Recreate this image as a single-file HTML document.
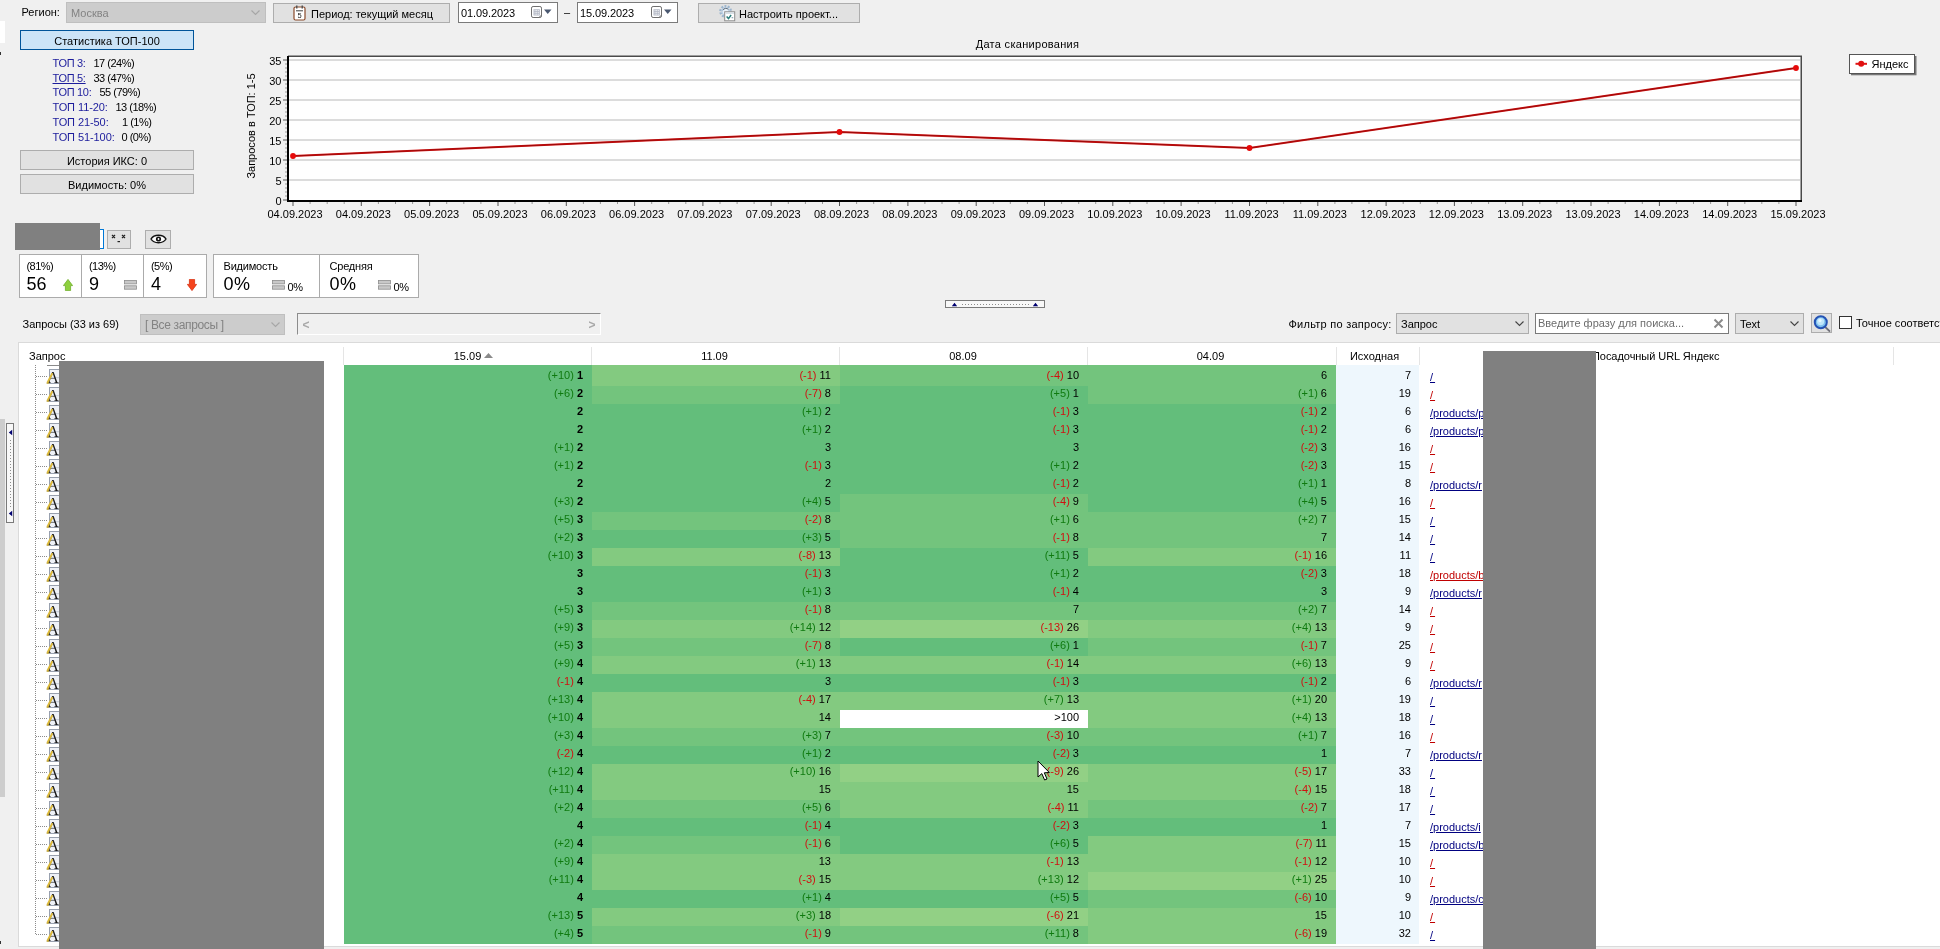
<!DOCTYPE html>
<html lang="ru"><head><meta charset="utf-8"><title>ТОП-100</title>
<style>
html,body{margin:0;padding:0}
body{width:1940px;height:949px;overflow:hidden;background:#f0f0f0;position:relative;
 font-family:"Liberation Sans",sans-serif;font-size:11px;color:#000;line-height:14px}
.a{position:absolute;white-space:nowrap}
.btn{position:absolute;box-sizing:border-box;background:#e1e1e1;border:1px solid #adadad;text-align:center;white-space:nowrap}
.cmbd{position:absolute;box-sizing:border-box;background:#cccccc;border:1px solid #bfbfbf;color:#838383;white-space:nowrap}
.inp{position:absolute;box-sizing:border-box;background:#fff;border:1px solid #7a7a7a;white-space:nowrap}
.gray{position:absolute;background:#808080}
.c{position:absolute;height:18px;box-sizing:border-box;text-align:right;white-space:nowrap;line-height:14px;padding-top:3px}
.g{color:#0f7a0f}.r{color:#d01010}
.c b{font-weight:bold}
.lb{color:#1c1c9c}
.u{text-decoration:underline}
.lnk{position:absolute;white-space:nowrap;text-decoration:underline;overflow:hidden;width:53px;height:14px}
.hd{position:absolute;top:348.5px;height:14px;white-space:nowrap}
</style></head><body>
<div id="app" style="position:absolute;left:0;top:0;width:1940px;height:949px;overflow:hidden;will-change:transform">

<div class="a" style="left:0;top:21px;width:5px;height:22px;background:#fff"></div>
<div class="a" style="left:0;top:52px;width:1px;height:3px;background:#333"></div>
<div class="a" style="left:0;top:419px;width:5px;height:378px;background:#cdcdcd"></div>
<div class="a" style="left:0;top:941px;width:1px;height:3px;background:#333"></div>
<div class="a" style="left:21.5px;top:5px">Регион:</div>
<div class="cmbd" style="left:66px;top:2px;width:200px;height:21px;padding:3px 0 0 4px">Москва<svg style="position:absolute;right:5px;top:7px" width="9" height="6" viewBox="0 0 9 6"><path d="M0.5 0.5 L4.5 4.5 L8.5 0.5" fill="none" stroke="#a6a6a6" stroke-width="1.1"/></svg></div>
<div class="btn" style="left:273px;top:3px;width:177px;height:20px"></div>
<svg class="a" style="left:293px;top:5px" width="13" height="16" viewBox="0 0 13 16">
<rect x="1" y="2" width="11" height="13" rx="1.5" fill="#fff" stroke="#8a4a2a" stroke-width="1.2"/>
<rect x="3" y="0.5" width="1.5" height="3" fill="#555"/><rect x="8.5" y="0.5" width="1.5" height="3" fill="#555"/>
<rect x="3" y="5.3" width="7" height="1" fill="#444"/>
<text x="6.5" y="13.2" font-size="7.5" font-family="Liberation Sans, sans-serif" text-anchor="middle" fill="#222">5</text></svg>
<div class="a" style="left:311px;top:7px">Период: текущий месяц</div>
<div class="inp" style="left:458px;top:2px;width:100px;height:21px"></div>
<div class="a" style="left:461px;top:6px;letter-spacing:-0.1px">01.09.2023</div>
<svg class="a" style="left:531px;top:5px" width="22" height="14" viewBox="0 0 22 14">
<rect x="0.5" y="1.5" width="10" height="11" rx="1.6" fill="#fff" stroke="#6e6e6e"/>
<rect x="2.5" y="4.2" width="6.3" height="6.3" fill="#b4b9c6"/><path d="M3.6 5.4h1M5.2 5.4h1M6.8 5.4h1M3.6 7.3h1M5.2 7.3h1M6.8 7.3h1M3.6 9.2h1M5.2 9.2h1M6.8 9.2h1" stroke="#fff" stroke-width="0.9" fill="none"/><path d="M8.3 12.2 L10.3 10.2" stroke="#666" stroke-width="1"/>
<path d="M13 4.5 L20.5 4.5 L16.75 9 Z" fill="#4a5870"/></svg>
<div class="inp" style="left:577px;top:2px;width:101px;height:21px"></div>
<div class="a" style="left:580px;top:6px;letter-spacing:-0.1px">15.09.2023</div>
<svg class="a" style="left:651px;top:5px" width="22" height="14" viewBox="0 0 22 14">
<rect x="0.5" y="1.5" width="10" height="11" rx="1.6" fill="#fff" stroke="#6e6e6e"/>
<rect x="2.5" y="4.2" width="6.3" height="6.3" fill="#b4b9c6"/><path d="M3.6 5.4h1M5.2 5.4h1M6.8 5.4h1M3.6 7.3h1M5.2 7.3h1M6.8 7.3h1M3.6 9.2h1M5.2 9.2h1M6.8 9.2h1" stroke="#fff" stroke-width="0.9" fill="none"/><path d="M8.3 12.2 L10.3 10.2" stroke="#666" stroke-width="1"/>
<path d="M13 4.5 L20.5 4.5 L16.75 9 Z" fill="#4a5870"/></svg>
<div class="a" style="left:564px;top:5px">–</div>
<div class="btn" style="left:698px;top:3px;width:162px;height:20px"></div>
<svg class="a" style="left:719px;top:4px" width="17" height="18" viewBox="0 0 17 18">
<circle cx="6.6" cy="7.4" r="5.2" fill="none" stroke="#9cb6cf" stroke-width="2.4" stroke-dasharray="1.9 1.35"/>
<circle cx="6.6" cy="7.4" r="3.6" fill="#e9f1fa" stroke="#b4cbe2" stroke-width="1.2"/>
<path d="M4 6.2 A3.2 3.2 0 0 1 9.4 5.6" fill="none" stroke="#4a5560" stroke-width="0.8"/>
<rect x="5.7" y="7.8" width="10" height="9" fill="#fff" stroke="#8c8c8c" stroke-width="1"/>
<rect x="6.4" y="8.5" width="8.6" height="1.4" fill="#d4dde6"/>
<path d="M7.6 12.6 l1.9 2 l2.6 -3.6" fill="none" stroke="#2a7c7a" stroke-width="1.5"/><rect x="12.6" y="13.3" width="1.6" height="0.9" fill="#6a8a9a"/></svg>
<div class="a" style="left:739px;top:7px">Настроить проект...</div>
<div class="btn" style="left:20px;top:30px;width:174px;height:20px;background:#cce4f7;border-color:#005499;line-height:14px;padding-top:3px">Статистика ТОП-100</div>
<div class="a lb" style="left:52.5px;top:56.4px;letter-spacing:-0.3px">ТОП 3:</div>
<div class="a" style="left:93.5px;top:56.4px;letter-spacing:-0.5px">17 (24%)</div>
<div class="a lb u" style="left:52.5px;top:70.6px;letter-spacing:-0.3px">ТОП 5:</div>
<div class="a" style="left:93.5px;top:70.6px;letter-spacing:-0.5px">33 (47%)</div>
<div class="a lb" style="left:52.5px;top:85.3px;letter-spacing:-0.3px">ТОП 10:</div>
<div class="a" style="left:99.5px;top:85.3px;letter-spacing:-0.5px">55 (79%)</div>
<div class="a lb" style="left:52.5px;top:100.3px;letter-spacing:-0.08px">ТОП 11-20:</div>
<div class="a" style="left:115.5px;top:100.3px;letter-spacing:-0.5px">13 (18%)</div>
<div class="a lb" style="left:52.5px;top:115.3px;letter-spacing:-0.08px">ТОП 21-50:</div>
<div class="a" style="left:122px;top:115.3px;letter-spacing:-0.5px">1 (1%)</div>
<div class="a lb" style="left:52.5px;top:129.6px;letter-spacing:-0.08px">ТОП 51-100:</div>
<div class="a" style="left:121.5px;top:129.6px;letter-spacing:-0.5px">0 (0%)</div>
<div class="btn" style="left:20px;top:150px;width:174px;height:20px;padding-top:3px">История ИКС: 0</div>
<div class="btn" style="left:20px;top:174px;width:174px;height:20px;padding-top:3px">Видимость: 0%</div>
<svg class="a" style="left:0;top:0" width="1940" height="232" viewBox="0 0 1940 232" font-family="Liberation Sans, sans-serif" font-size="11">
<rect x="288" y="56" width="1513" height="144" fill="#fff"/>
<rect x="289" y="179" width="1511" height="2" fill="#dcdcdc"/>
<rect x="289" y="159" width="1511" height="2" fill="#dcdcdc"/>
<rect x="289" y="139" width="1511" height="2" fill="#dcdcdc"/>
<rect x="289" y="119" width="1511" height="2" fill="#dcdcdc"/>
<rect x="289" y="99" width="1511" height="2" fill="#dcdcdc"/>
<rect x="289" y="79" width="1511" height="2" fill="#dcdcdc"/>
<rect x="289" y="59" width="1511" height="2" fill="#dcdcdc"/>
<rect x="283" y="199.5" width="5" height="1" fill="#555"/>
<rect x="285" y="195.5" width="3" height="1" fill="#999"/>
<rect x="285" y="191.5" width="3" height="1" fill="#999"/>
<rect x="285" y="187.5" width="3" height="1" fill="#999"/>
<rect x="285" y="183.5" width="3" height="1" fill="#999"/>
<rect x="283" y="179.5" width="5" height="1" fill="#555"/>
<rect x="285" y="175.5" width="3" height="1" fill="#999"/>
<rect x="285" y="171.5" width="3" height="1" fill="#999"/>
<rect x="285" y="167.5" width="3" height="1" fill="#999"/>
<rect x="285" y="163.5" width="3" height="1" fill="#999"/>
<rect x="283" y="159.5" width="5" height="1" fill="#555"/>
<rect x="285" y="155.5" width="3" height="1" fill="#999"/>
<rect x="285" y="151.5" width="3" height="1" fill="#999"/>
<rect x="285" y="147.5" width="3" height="1" fill="#999"/>
<rect x="285" y="143.5" width="3" height="1" fill="#999"/>
<rect x="283" y="139.5" width="5" height="1" fill="#555"/>
<rect x="285" y="135.5" width="3" height="1" fill="#999"/>
<rect x="285" y="131.5" width="3" height="1" fill="#999"/>
<rect x="285" y="127.5" width="3" height="1" fill="#999"/>
<rect x="285" y="123.5" width="3" height="1" fill="#999"/>
<rect x="283" y="119.5" width="5" height="1" fill="#555"/>
<rect x="285" y="115.5" width="3" height="1" fill="#999"/>
<rect x="285" y="111.5" width="3" height="1" fill="#999"/>
<rect x="285" y="107.5" width="3" height="1" fill="#999"/>
<rect x="285" y="103.5" width="3" height="1" fill="#999"/>
<rect x="283" y="99.5" width="5" height="1" fill="#555"/>
<rect x="285" y="95.5" width="3" height="1" fill="#999"/>
<rect x="285" y="91.5" width="3" height="1" fill="#999"/>
<rect x="285" y="87.5" width="3" height="1" fill="#999"/>
<rect x="285" y="83.5" width="3" height="1" fill="#999"/>
<rect x="283" y="79.5" width="5" height="1" fill="#555"/>
<rect x="285" y="75.5" width="3" height="1" fill="#999"/>
<rect x="285" y="71.5" width="3" height="1" fill="#999"/>
<rect x="285" y="67.5" width="3" height="1" fill="#999"/>
<rect x="285" y="63.5" width="3" height="1" fill="#999"/>
<rect x="283" y="59.5" width="5" height="1" fill="#555"/>
<text x="281.5" y="205" text-anchor="end">0</text>
<text x="281.5" y="185" text-anchor="end">5</text>
<text x="281.5" y="165" text-anchor="end">10</text>
<text x="281.5" y="145" text-anchor="end">15</text>
<text x="281.5" y="125" text-anchor="end">20</text>
<text x="281.5" y="105" text-anchor="end">25</text>
<text x="281.5" y="85" text-anchor="end">30</text>
<text x="281.5" y="65" text-anchor="end">35</text>
<rect x="288" y="55.5" width="1514" height="1.5" fill="#4a4a4a"/>
<rect x="1800.5" y="56" width="1.5" height="145" fill="#4a4a4a"/>
<rect x="287" y="56" width="2" height="146" fill="#000"/>
<rect x="287" y="200" width="1515" height="2" fill="#000"/>
<rect x="292.5" y="202" width="1" height="4" fill="#555"/>
<rect x="309.6" y="202" width="1" height="2" fill="#999"/>
<rect x="326.7" y="202" width="1" height="2" fill="#999"/>
<rect x="343.7" y="202" width="1" height="2" fill="#999"/>
<rect x="360.8" y="202" width="1" height="4" fill="#555"/>
<rect x="377.9" y="202" width="1" height="2" fill="#999"/>
<rect x="395.0" y="202" width="1" height="2" fill="#999"/>
<rect x="412.1" y="202" width="1" height="2" fill="#999"/>
<rect x="429.1" y="202" width="1" height="4" fill="#555"/>
<rect x="446.2" y="202" width="1" height="2" fill="#999"/>
<rect x="463.3" y="202" width="1" height="2" fill="#999"/>
<rect x="480.4" y="202" width="1" height="2" fill="#999"/>
<rect x="497.5" y="202" width="1" height="4" fill="#555"/>
<rect x="514.5" y="202" width="1" height="2" fill="#999"/>
<rect x="531.6" y="202" width="1" height="2" fill="#999"/>
<rect x="548.7" y="202" width="1" height="2" fill="#999"/>
<rect x="565.8" y="202" width="1" height="4" fill="#555"/>
<rect x="582.9" y="202" width="1" height="2" fill="#999"/>
<rect x="599.9" y="202" width="1" height="2" fill="#999"/>
<rect x="617.0" y="202" width="1" height="2" fill="#999"/>
<rect x="634.1" y="202" width="1" height="4" fill="#555"/>
<rect x="651.2" y="202" width="1" height="2" fill="#999"/>
<rect x="668.2" y="202" width="1" height="2" fill="#999"/>
<rect x="685.3" y="202" width="1" height="2" fill="#999"/>
<rect x="702.4" y="202" width="1" height="4" fill="#555"/>
<rect x="719.5" y="202" width="1" height="2" fill="#999"/>
<rect x="736.6" y="202" width="1" height="2" fill="#999"/>
<rect x="753.6" y="202" width="1" height="2" fill="#999"/>
<rect x="770.7" y="202" width="1" height="4" fill="#555"/>
<rect x="787.8" y="202" width="1" height="2" fill="#999"/>
<rect x="804.9" y="202" width="1" height="2" fill="#999"/>
<rect x="822.0" y="202" width="1" height="2" fill="#999"/>
<rect x="839.0" y="202" width="1" height="4" fill="#555"/>
<rect x="856.1" y="202" width="1" height="2" fill="#999"/>
<rect x="873.2" y="202" width="1" height="2" fill="#999"/>
<rect x="890.3" y="202" width="1" height="2" fill="#999"/>
<rect x="907.4" y="202" width="1" height="4" fill="#555"/>
<rect x="924.4" y="202" width="1" height="2" fill="#999"/>
<rect x="941.5" y="202" width="1" height="2" fill="#999"/>
<rect x="958.6" y="202" width="1" height="2" fill="#999"/>
<rect x="975.7" y="202" width="1" height="4" fill="#555"/>
<rect x="992.8" y="202" width="1" height="2" fill="#999"/>
<rect x="1009.8" y="202" width="1" height="2" fill="#999"/>
<rect x="1026.9" y="202" width="1" height="2" fill="#999"/>
<rect x="1044.0" y="202" width="1" height="4" fill="#555"/>
<rect x="1061.1" y="202" width="1" height="2" fill="#999"/>
<rect x="1078.2" y="202" width="1" height="2" fill="#999"/>
<rect x="1095.2" y="202" width="1" height="2" fill="#999"/>
<rect x="1112.3" y="202" width="1" height="4" fill="#555"/>
<rect x="1129.4" y="202" width="1" height="2" fill="#999"/>
<rect x="1146.5" y="202" width="1" height="2" fill="#999"/>
<rect x="1163.6" y="202" width="1" height="2" fill="#999"/>
<rect x="1180.6" y="202" width="1" height="4" fill="#555"/>
<rect x="1197.7" y="202" width="1" height="2" fill="#999"/>
<rect x="1214.8" y="202" width="1" height="2" fill="#999"/>
<rect x="1231.9" y="202" width="1" height="2" fill="#999"/>
<rect x="1249.0" y="202" width="1" height="4" fill="#555"/>
<rect x="1266.0" y="202" width="1" height="2" fill="#999"/>
<rect x="1283.1" y="202" width="1" height="2" fill="#999"/>
<rect x="1300.2" y="202" width="1" height="2" fill="#999"/>
<rect x="1317.3" y="202" width="1" height="4" fill="#555"/>
<rect x="1334.4" y="202" width="1" height="2" fill="#999"/>
<rect x="1351.4" y="202" width="1" height="2" fill="#999"/>
<rect x="1368.5" y="202" width="1" height="2" fill="#999"/>
<rect x="1385.6" y="202" width="1" height="4" fill="#555"/>
<rect x="1402.7" y="202" width="1" height="2" fill="#999"/>
<rect x="1419.8" y="202" width="1" height="2" fill="#999"/>
<rect x="1436.8" y="202" width="1" height="2" fill="#999"/>
<rect x="1453.9" y="202" width="1" height="4" fill="#555"/>
<rect x="1471.0" y="202" width="1" height="2" fill="#999"/>
<rect x="1488.1" y="202" width="1" height="2" fill="#999"/>
<rect x="1505.1" y="202" width="1" height="2" fill="#999"/>
<rect x="1522.2" y="202" width="1" height="4" fill="#555"/>
<rect x="1539.3" y="202" width="1" height="2" fill="#999"/>
<rect x="1556.4" y="202" width="1" height="2" fill="#999"/>
<rect x="1573.5" y="202" width="1" height="2" fill="#999"/>
<rect x="1590.5" y="202" width="1" height="4" fill="#555"/>
<rect x="1607.6" y="202" width="1" height="2" fill="#999"/>
<rect x="1624.7" y="202" width="1" height="2" fill="#999"/>
<rect x="1641.8" y="202" width="1" height="2" fill="#999"/>
<rect x="1658.9" y="202" width="1" height="4" fill="#555"/>
<rect x="1675.9" y="202" width="1" height="2" fill="#999"/>
<rect x="1693.0" y="202" width="1" height="2" fill="#999"/>
<rect x="1710.1" y="202" width="1" height="2" fill="#999"/>
<rect x="1727.2" y="202" width="1" height="4" fill="#555"/>
<rect x="1744.3" y="202" width="1" height="2" fill="#999"/>
<rect x="1761.3" y="202" width="1" height="2" fill="#999"/>
<rect x="1778.4" y="202" width="1" height="2" fill="#999"/>
<rect x="1795.5" y="202" width="1" height="4" fill="#555"/>
<text x="295.0" y="218" text-anchor="middle">04.09.2023</text>
<text x="363.3" y="218" text-anchor="middle">04.09.2023</text>
<text x="431.6" y="218" text-anchor="middle">05.09.2023</text>
<text x="500.0" y="218" text-anchor="middle">05.09.2023</text>
<text x="568.3" y="218" text-anchor="middle">06.09.2023</text>
<text x="636.6" y="218" text-anchor="middle">06.09.2023</text>
<text x="704.9" y="218" text-anchor="middle">07.09.2023</text>
<text x="773.2" y="218" text-anchor="middle">07.09.2023</text>
<text x="841.5" y="218" text-anchor="middle">08.09.2023</text>
<text x="909.9" y="218" text-anchor="middle">08.09.2023</text>
<text x="978.2" y="218" text-anchor="middle">09.09.2023</text>
<text x="1046.5" y="218" text-anchor="middle">09.09.2023</text>
<text x="1114.8" y="218" text-anchor="middle">10.09.2023</text>
<text x="1183.1" y="218" text-anchor="middle">10.09.2023</text>
<text x="1251.5" y="218" text-anchor="middle">11.09.2023</text>
<text x="1319.8" y="218" text-anchor="middle">11.09.2023</text>
<text x="1388.1" y="218" text-anchor="middle">12.09.2023</text>
<text x="1456.4" y="218" text-anchor="middle">12.09.2023</text>
<text x="1524.7" y="218" text-anchor="middle">13.09.2023</text>
<text x="1593.0" y="218" text-anchor="middle">13.09.2023</text>
<text x="1661.4" y="218" text-anchor="middle">14.09.2023</text>
<text x="1729.7" y="218" text-anchor="middle">14.09.2023</text>
<text x="1798.0" y="218" text-anchor="middle">15.09.2023</text>
<text x="1027.5" y="48" text-anchor="middle" letter-spacing="0.3">Дата сканирования</text>
<text transform="translate(254.5,126) rotate(-90)" text-anchor="middle">Запросов в ТОП: 1-5</text>
<polyline points="293.0,156 839.5,132 1249.5,148 1796.0,68" fill="none" stroke="#d01010" stroke-width="2"/>
<polyline points="293.0,156 839.5,132 1249.5,148 1796.0,68" fill="none" stroke="#8a0808" stroke-width="0.7"/>
<circle cx="293.0" cy="156" r="2.9" fill="#e60a0a"/>
<circle cx="839.5" cy="132" r="2.9" fill="#e60a0a"/>
<circle cx="1249.5" cy="148" r="2.9" fill="#e60a0a"/>
<circle cx="1796.0" cy="68" r="2.9" fill="#e60a0a"/>
<rect x="1851" y="56" width="65.5" height="19.3" fill="#777"/>
<rect x="1849.5" y="54.5" width="65" height="19" fill="#fff" stroke="#555" stroke-width="1"/>
<rect x="1855.5" y="62.8" width="11.5" height="2" fill="#e01515"/><circle cx="1861.2" cy="63.8" r="3" fill="#e01010"/>
<text x="1871.5" y="67.8">Яндекс</text>
</svg>
<div class="inp" style="left:16px;top:229px;width:88px;height:20px;border-color:#0078d7"></div>
<div class="gray" style="left:15px;top:223px;width:85px;height:27px"></div>
<div class="btn" style="left:107px;top:230px;width:24px;height:19px"></div>
<svg class="a" style="left:111px;top:234px" width="16" height="10" viewBox="0 0 16 10"><path d="M1 1l3 3M4 1l-3 3M11 1l3 3M14 1l-3 3" stroke="#222" stroke-width="1.2"/><rect x="6.5" y="7" width="2.5" height="1.2" fill="#222"/></svg>
<div class="btn" style="left:145px;top:230px;width:26px;height:19px"></div>
<svg class="a" style="left:150px;top:233px" width="17" height="12" viewBox="0 0 17 12"><path d="M1 6 C4 1,13 1,16 6 C13 11,4 11,1 6 Z" fill="#fff" stroke="#111" stroke-width="1.4"/><circle cx="8.5" cy="6" r="2.6" fill="#111"/><circle cx="8.5" cy="6" r="0.9" fill="#fff"/></svg>
<div class="a" style="left:19px;top:254px;width:63px;height:44px;box-sizing:border-box;background:#fff;border:1px solid #ababab"></div>
<div class="a" style="left:81px;top:254px;width:63px;height:44px;box-sizing:border-box;background:#fff;border:1px solid #ababab"></div>
<div class="a" style="left:143px;top:254px;width:64px;height:44px;box-sizing:border-box;background:#fff;border:1px solid #ababab"></div>
<div class="a" style="left:213px;top:254px;width:107px;height:44px;box-sizing:border-box;background:#fff;border:1px solid #ababab"></div>
<div class="a" style="left:319px;top:254px;width:100px;height:44px;box-sizing:border-box;background:#fff;border:1px solid #ababab"></div>
<div class="a" style="left:26.5px;top:259px;letter-spacing:-0.55px">(81%)</div>
<div class="a" style="left:26.5px;top:274px;font-size:18px;line-height:20px">56</div>
<div class="a" style="left:89px;top:259px;letter-spacing:-0.55px">(13%)</div>
<div class="a" style="left:89px;top:274px;font-size:18px;line-height:20px">9</div>
<div class="a" style="left:151px;top:259px;letter-spacing:-0.55px">(5%)</div>
<div class="a" style="left:151px;top:274px;font-size:18px;line-height:20px">4</div>
<svg class="a" style="left:62.5px;top:279px" width="10" height="12" viewBox="0 0 10 12"><path d="M5 0.4 L9.6 6.6 L7.6 6.6 L7.6 11.6 L2.4 11.6 L2.4 6.6 L0.4 6.6 Z" fill="#8ed03e" stroke="#6fae2a" stroke-width="0.8"/></svg>
<svg class="a" style="left:123.5px;top:280px" width="13" height="10" viewBox="0 0 13 10"><rect x="0.5" y="0.5" width="12" height="3.4" fill="#c8c8c8" stroke="#8c8c8c" stroke-width="0.8"/><rect x="0.5" y="5.8" width="12" height="3.4" fill="#c8c8c8" stroke="#8c8c8c" stroke-width="0.8"/></svg>
<svg class="a" style="left:187.3px;top:278.8px" width="10" height="12" viewBox="0 0 10 12"><path d="M5 11.6 L9.6 5.4 L7.6 5.4 L7.6 0.4 L2.4 0.4 L2.4 5.4 L0.4 5.4 Z" fill="#f4431c" stroke="#d8300f" stroke-width="0.8"/></svg>
<div class="a" style="left:223.5px;top:259px;letter-spacing:-0.2px">Видимость</div>
<div class="a" style="left:223.5px;top:274px;font-size:18px;line-height:20px;letter-spacing:0.6px">0%</div>
<svg class="a" style="left:271.5px;top:280px" width="13" height="10" viewBox="0 0 13 10"><rect x="0.5" y="0.5" width="12" height="3.4" fill="#c8c8c8" stroke="#8c8c8c" stroke-width="0.8"/><rect x="0.5" y="5.8" width="12" height="3.4" fill="#c8c8c8" stroke="#8c8c8c" stroke-width="0.8"/></svg>
<div class="a" style="left:287.5px;top:280px;letter-spacing:-0.4px">0%</div>
<div class="a" style="left:329.5px;top:259px;letter-spacing:-0.2px">Средняя</div>
<div class="a" style="left:329.5px;top:274px;font-size:18px;line-height:20px;letter-spacing:0.6px">0%</div>
<svg class="a" style="left:377.5px;top:280px" width="13" height="10" viewBox="0 0 13 10"><rect x="0.5" y="0.5" width="12" height="3.4" fill="#c8c8c8" stroke="#8c8c8c" stroke-width="0.8"/><rect x="0.5" y="5.8" width="12" height="3.4" fill="#c8c8c8" stroke="#8c8c8c" stroke-width="0.8"/></svg>
<div class="a" style="left:393.5px;top:280px;letter-spacing:-0.4px">0%</div>
<div class="a" style="left:945px;top:300px;width:100px;height:8px;box-sizing:border-box;border:1px solid #7a7a7a;background:#f8f8f8"></div>
<svg class="a" style="left:945px;top:300px" width="100" height="8" viewBox="0 0 100 8"><path d="M6.8 6.2 L9.5 2.8 L12.2 6.2 Z M87.8 6.2 L90.5 2.8 L93.2 6.2 Z" fill="#000070"/><path d="M17 4.5 H85" stroke="#8c8c8c" stroke-width="1" stroke-dasharray="1 2"/></svg>
<div class="a" style="left:6px;top:423px;width:8px;height:100px;box-sizing:border-box;border:1px solid #7a7a7a;background:#f8f8f8"></div>
<svg class="a" style="left:6px;top:423px" width="8" height="100" viewBox="0 0 8 100"><path d="M6.2 6.8 L2.8 9.5 L6.2 12.2 Z M6.2 87.8 L2.8 90.5 L6.2 93.2 Z" fill="#000070"/><path d="M4.5 17 V85" stroke="#8c8c8c" stroke-width="1" stroke-dasharray="1 2"/></svg>
<div class="a" style="left:22.5px;top:317px;letter-spacing:0px">Запросы (33 из 69)</div>
<div class="cmbd" style="left:140px;top:314px;width:145px;height:21px;padding:3px 0 0 4px;font-size:12px;letter-spacing:-0.35px">[ Все запросы ]<svg style="position:absolute;right:4px;top:7px" width="9" height="6" viewBox="0 0 9 6"><path d="M0.5 0.5 L4.5 4.5 L8.5 0.5" fill="none" stroke="#a6a6a6" stroke-width="1.1"/></svg></div>
<div class="a" style="left:297px;top:313px;width:304px;height:22px;box-sizing:border-box;background:#f0f0f0;border:1px solid;border-color:#8c8c8c #fff #fff #8c8c8c"></div>
<div class="a" style="left:302.5px;top:318px;color:#a8a8a8;font-weight:bold;font-size:12px">&lt;</div>
<div class="a" style="left:588.5px;top:318px;color:#a8a8a8;font-weight:bold;font-size:12px">&gt;</div>
<div class="a" style="left:1288.5px;top:317px;letter-spacing:0.25px">Фильтр по запросу:</div>
<div class="btn" style="left:1396px;top:313px;width:133px;height:21px;text-align:left;padding:3px 0 0 4px">Запрос<svg style="position:absolute;right:4px;top:7px" width="9" height="6" viewBox="0 0 9 6"><path d="M0.5 0.5 L4.5 4.5 L8.5 0.5" fill="none" stroke="#444" stroke-width="1.1"/></svg></div>
<div class="inp" style="left:1535px;top:313px;width:194px;height:21px;padding:2px 0 0 2px;color:#6d6d6d">Введите фразу для поиска...<svg style="position:absolute;right:4px;top:4px" width="11" height="11" viewBox="0 0 11 11"><path d="M1.5 1.5 L9.5 9.5 M9.5 1.5 L1.5 9.5" stroke="#8a8a8a" stroke-width="2"/></svg></div>
<div class="btn" style="left:1735px;top:313px;width:69px;height:21px;text-align:left;padding:3px 0 0 4px">Text<svg style="position:absolute;right:4px;top:7px" width="9" height="6" viewBox="0 0 9 6"><path d="M0.5 0.5 L4.5 4.5 L8.5 0.5" fill="none" stroke="#444" stroke-width="1.1"/></svg></div>
<div class="btn" style="left:1811px;top:313px;width:21px;height:20px"></div>
<svg class="a" style="left:1813px;top:315px" width="18" height="18" viewBox="0 0 18 18"><path d="M12.2 12 L17 16.6" stroke="#6e6e78" stroke-width="1.8"/><circle cx="7.8" cy="7.2" r="6" fill="#7fc0ee" stroke="#2452b4" stroke-width="2"/><circle cx="7.6" cy="6.6" r="3.6" fill="#bfe6fa"/><circle cx="7" cy="5.6" r="1.6" fill="#e8f8ff"/></svg>
<div class="a" style="left:1839px;top:316px;width:13px;height:13px;box-sizing:border-box;background:#fff;border:1px solid #333"></div>
<div class="a" style="left:1856px;top:316px">Точное соответствие</div>
<div class="a" style="left:18px;top:342px;width:1930px;height:605px;box-sizing:border-box;background:#fff;border:1px solid #dadada"></div>
<div class="a" style="left:343px;top:347px;width:1px;height:18px;background:#e5e5e5"></div>
<div class="a" style="left:591px;top:347px;width:1px;height:18px;background:#e5e5e5"></div>
<div class="a" style="left:839px;top:347px;width:1px;height:18px;background:#e5e5e5"></div>
<div class="a" style="left:1087px;top:347px;width:1px;height:18px;background:#e5e5e5"></div>
<div class="a" style="left:1336px;top:347px;width:1px;height:18px;background:#e5e5e5"></div>
<div class="a" style="left:1419px;top:347px;width:1px;height:18px;background:#e5e5e5"></div>
<div class="a" style="left:1893px;top:347px;width:1px;height:18px;background:#e5e5e5"></div>
<div class="hd" style="left:29px">Запрос</div>
<div class="hd" style="left:367.5px;width:200px;text-align:center">15.09</div>
<svg class="a" style="left:484px;top:353px" width="9" height="5" viewBox="0 0 9 5"><path d="M0 5 L4.5 0 L9 5 Z" fill="#8a8a8a"/></svg>
<div class="hd" style="left:614.5px;width:200px;text-align:center">11.09</div>
<div class="hd" style="left:863px;width:200px;text-align:center">08.09</div>
<div class="hd" style="left:1110.5px;width:200px;text-align:center">04.09</div>
<div class="hd" style="left:1274.5px;width:200px;text-align:center">Исходная</div>
<div class="hd" style="left:1592px;letter-spacing:-0.05px">Посадочный URL Яндекс</div>
<div class="c" style="left:344px;top:365px;width:248px;height:21px;padding-top:3px;padding-right:9px;background:#63be7b"><span class="g">(+10)</span> <b>1</b></div>
<div class="c" style="left:592px;top:365px;width:248px;height:21px;padding-top:3px;padding-right:9px;background:#83ca80"><span class="r">(-1)</span> 11</div>
<div class="c" style="left:840px;top:365px;width:248px;height:21px;padding-top:3px;padding-right:9px;background:#73c47d"><span class="r">(-4)</span> 10</div>
<div class="c" style="left:1088px;top:365px;width:248px;height:21px;padding-top:3px;padding-right:9px;background:#73c47d">6</div>
<div class="c" style="left:1336px;top:365px;width:83px;height:21px;padding-top:3px;padding-right:8px;background:#eef7fd">7</div>
<div class="lnk" style="left:1430px;top:370px;color:#000080;letter-spacing:2px">/</div>
<div class="a" style="left:36px;top:376px;width:11px;height:1px;background:repeating-linear-gradient(90deg,#8c8c8c 0 1px,transparent 1px 2px)"></div>
<svg class="a" style="left:45px;top:368px" width="16" height="17" viewBox="0 0 16 17"><rect x="4.5" y="1.5" width="11" height="14" fill="#eef1f7" stroke="#98a0ae" stroke-width="1"/><rect x="5.5" y="9.2" width="9" height="1" fill="#c4cad6"/><text x="2.3" y="15.4" font-family="Liberation Serif, serif" font-size="16" fill="#1a1a1a">A</text><path d="M2.3 15 L7.4 5.2" stroke="#dcb93a" stroke-width="1.9"/><path d="M1.6 15.3 H4.2" stroke="#b09428" stroke-width="0.9"/></svg>
<div class="c" style="left:344px;top:386px;width:248px;height:18px;padding-top:0px;padding-right:9px;background:#63be7b"><span class="g">(+6)</span> <b>2</b></div>
<div class="c" style="left:592px;top:386px;width:248px;height:18px;padding-top:0px;padding-right:9px;background:#73c47d"><span class="r">(-7)</span> 8</div>
<div class="c" style="left:840px;top:386px;width:248px;height:18px;padding-top:0px;padding-right:9px;background:#63be7b"><span class="g">(+5)</span> 1</div>
<div class="c" style="left:1088px;top:386px;width:248px;height:18px;padding-top:0px;padding-right:9px;background:#73c47d"><span class="g">(+1)</span> 6</div>
<div class="c" style="left:1336px;top:386px;width:83px;height:18px;padding-top:0px;padding-right:8px;background:#eef7fd">19</div>
<div class="lnk" style="left:1430px;top:388px;color:#c00000;letter-spacing:2px">/</div>
<div class="a" style="left:36px;top:394px;width:11px;height:1px;background:repeating-linear-gradient(90deg,#8c8c8c 0 1px,transparent 1px 2px)"></div>
<svg class="a" style="left:45px;top:386px" width="16" height="17" viewBox="0 0 16 17"><rect x="4.5" y="1.5" width="11" height="14" fill="#eef1f7" stroke="#98a0ae" stroke-width="1"/><rect x="5.5" y="9.2" width="9" height="1" fill="#c4cad6"/><text x="2.3" y="15.4" font-family="Liberation Serif, serif" font-size="16" fill="#1a1a1a">A</text><path d="M2.3 15 L7.4 5.2" stroke="#dcb93a" stroke-width="1.9"/><path d="M1.6 15.3 H4.2" stroke="#b09428" stroke-width="0.9"/></svg>
<div class="c" style="left:344px;top:404px;width:248px;height:18px;padding-top:0px;padding-right:9px;background:#63be7b"><b>2</b></div>
<div class="c" style="left:592px;top:404px;width:248px;height:18px;padding-top:0px;padding-right:9px;background:#63be7b"><span class="g">(+1)</span> 2</div>
<div class="c" style="left:840px;top:404px;width:248px;height:18px;padding-top:0px;padding-right:9px;background:#63be7b"><span class="r">(-1)</span> 3</div>
<div class="c" style="left:1088px;top:404px;width:248px;height:18px;padding-top:0px;padding-right:9px;background:#63be7b"><span class="r">(-1)</span> 2</div>
<div class="c" style="left:1336px;top:404px;width:83px;height:18px;padding-top:0px;padding-right:8px;background:#eef7fd">6</div>
<div class="lnk" style="left:1430px;top:406px;color:#000080">/products/p</div>
<div class="a" style="left:36px;top:412px;width:11px;height:1px;background:repeating-linear-gradient(90deg,#8c8c8c 0 1px,transparent 1px 2px)"></div>
<svg class="a" style="left:45px;top:404px" width="16" height="17" viewBox="0 0 16 17"><rect x="4.5" y="1.5" width="11" height="14" fill="#eef1f7" stroke="#98a0ae" stroke-width="1"/><rect x="5.5" y="9.2" width="9" height="1" fill="#c4cad6"/><text x="2.3" y="15.4" font-family="Liberation Serif, serif" font-size="16" fill="#1a1a1a">A</text><path d="M2.3 15 L7.4 5.2" stroke="#dcb93a" stroke-width="1.9"/><path d="M1.6 15.3 H4.2" stroke="#b09428" stroke-width="0.9"/></svg>
<div class="c" style="left:344px;top:422px;width:248px;height:18px;padding-top:0px;padding-right:9px;background:#63be7b"><b>2</b></div>
<div class="c" style="left:592px;top:422px;width:248px;height:18px;padding-top:0px;padding-right:9px;background:#63be7b"><span class="g">(+1)</span> 2</div>
<div class="c" style="left:840px;top:422px;width:248px;height:18px;padding-top:0px;padding-right:9px;background:#63be7b"><span class="r">(-1)</span> 3</div>
<div class="c" style="left:1088px;top:422px;width:248px;height:18px;padding-top:0px;padding-right:9px;background:#63be7b"><span class="r">(-1)</span> 2</div>
<div class="c" style="left:1336px;top:422px;width:83px;height:18px;padding-top:0px;padding-right:8px;background:#eef7fd">6</div>
<div class="lnk" style="left:1430px;top:424px;color:#000080">/products/p</div>
<div class="a" style="left:36px;top:430px;width:11px;height:1px;background:repeating-linear-gradient(90deg,#8c8c8c 0 1px,transparent 1px 2px)"></div>
<svg class="a" style="left:45px;top:422px" width="16" height="17" viewBox="0 0 16 17"><rect x="4.5" y="1.5" width="11" height="14" fill="#eef1f7" stroke="#98a0ae" stroke-width="1"/><rect x="5.5" y="9.2" width="9" height="1" fill="#c4cad6"/><text x="2.3" y="15.4" font-family="Liberation Serif, serif" font-size="16" fill="#1a1a1a">A</text><path d="M2.3 15 L7.4 5.2" stroke="#dcb93a" stroke-width="1.9"/><path d="M1.6 15.3 H4.2" stroke="#b09428" stroke-width="0.9"/></svg>
<div class="c" style="left:344px;top:440px;width:248px;height:18px;padding-top:0px;padding-right:9px;background:#63be7b"><span class="g">(+1)</span> <b>2</b></div>
<div class="c" style="left:592px;top:440px;width:248px;height:18px;padding-top:0px;padding-right:9px;background:#63be7b">3</div>
<div class="c" style="left:840px;top:440px;width:248px;height:18px;padding-top:0px;padding-right:9px;background:#63be7b">3</div>
<div class="c" style="left:1088px;top:440px;width:248px;height:18px;padding-top:0px;padding-right:9px;background:#63be7b"><span class="r">(-2)</span> 3</div>
<div class="c" style="left:1336px;top:440px;width:83px;height:18px;padding-top:0px;padding-right:8px;background:#eef7fd">16</div>
<div class="lnk" style="left:1430px;top:442px;color:#c00000;letter-spacing:2px">/</div>
<div class="a" style="left:36px;top:448px;width:11px;height:1px;background:repeating-linear-gradient(90deg,#8c8c8c 0 1px,transparent 1px 2px)"></div>
<svg class="a" style="left:45px;top:440px" width="16" height="17" viewBox="0 0 16 17"><rect x="4.5" y="1.5" width="11" height="14" fill="#eef1f7" stroke="#98a0ae" stroke-width="1"/><rect x="5.5" y="9.2" width="9" height="1" fill="#c4cad6"/><text x="2.3" y="15.4" font-family="Liberation Serif, serif" font-size="16" fill="#1a1a1a">A</text><path d="M2.3 15 L7.4 5.2" stroke="#dcb93a" stroke-width="1.9"/><path d="M1.6 15.3 H4.2" stroke="#b09428" stroke-width="0.9"/></svg>
<div class="c" style="left:344px;top:458px;width:248px;height:18px;padding-top:0px;padding-right:9px;background:#63be7b"><span class="g">(+1)</span> <b>2</b></div>
<div class="c" style="left:592px;top:458px;width:248px;height:18px;padding-top:0px;padding-right:9px;background:#63be7b"><span class="r">(-1)</span> 3</div>
<div class="c" style="left:840px;top:458px;width:248px;height:18px;padding-top:0px;padding-right:9px;background:#63be7b"><span class="g">(+1)</span> 2</div>
<div class="c" style="left:1088px;top:458px;width:248px;height:18px;padding-top:0px;padding-right:9px;background:#63be7b"><span class="r">(-2)</span> 3</div>
<div class="c" style="left:1336px;top:458px;width:83px;height:18px;padding-top:0px;padding-right:8px;background:#eef7fd">15</div>
<div class="lnk" style="left:1430px;top:460px;color:#c00000;letter-spacing:2px">/</div>
<div class="a" style="left:36px;top:466px;width:11px;height:1px;background:repeating-linear-gradient(90deg,#8c8c8c 0 1px,transparent 1px 2px)"></div>
<svg class="a" style="left:45px;top:458px" width="16" height="17" viewBox="0 0 16 17"><rect x="4.5" y="1.5" width="11" height="14" fill="#eef1f7" stroke="#98a0ae" stroke-width="1"/><rect x="5.5" y="9.2" width="9" height="1" fill="#c4cad6"/><text x="2.3" y="15.4" font-family="Liberation Serif, serif" font-size="16" fill="#1a1a1a">A</text><path d="M2.3 15 L7.4 5.2" stroke="#dcb93a" stroke-width="1.9"/><path d="M1.6 15.3 H4.2" stroke="#b09428" stroke-width="0.9"/></svg>
<div class="c" style="left:344px;top:476px;width:248px;height:18px;padding-top:0px;padding-right:9px;background:#63be7b"><b>2</b></div>
<div class="c" style="left:592px;top:476px;width:248px;height:18px;padding-top:0px;padding-right:9px;background:#63be7b">2</div>
<div class="c" style="left:840px;top:476px;width:248px;height:18px;padding-top:0px;padding-right:9px;background:#63be7b"><span class="r">(-1)</span> 2</div>
<div class="c" style="left:1088px;top:476px;width:248px;height:18px;padding-top:0px;padding-right:9px;background:#63be7b"><span class="g">(+1)</span> 1</div>
<div class="c" style="left:1336px;top:476px;width:83px;height:18px;padding-top:0px;padding-right:8px;background:#eef7fd">8</div>
<div class="lnk" style="left:1430px;top:478px;color:#000080">/products/r</div>
<div class="a" style="left:36px;top:484px;width:11px;height:1px;background:repeating-linear-gradient(90deg,#8c8c8c 0 1px,transparent 1px 2px)"></div>
<svg class="a" style="left:45px;top:476px" width="16" height="17" viewBox="0 0 16 17"><rect x="4.5" y="1.5" width="11" height="14" fill="#eef1f7" stroke="#98a0ae" stroke-width="1"/><rect x="5.5" y="9.2" width="9" height="1" fill="#c4cad6"/><text x="2.3" y="15.4" font-family="Liberation Serif, serif" font-size="16" fill="#1a1a1a">A</text><path d="M2.3 15 L7.4 5.2" stroke="#dcb93a" stroke-width="1.9"/><path d="M1.6 15.3 H4.2" stroke="#b09428" stroke-width="0.9"/></svg>
<div class="c" style="left:344px;top:494px;width:248px;height:18px;padding-top:0px;padding-right:9px;background:#63be7b"><span class="g">(+3)</span> <b>2</b></div>
<div class="c" style="left:592px;top:494px;width:248px;height:18px;padding-top:0px;padding-right:9px;background:#63be7b"><span class="g">(+4)</span> 5</div>
<div class="c" style="left:840px;top:494px;width:248px;height:18px;padding-top:0px;padding-right:9px;background:#73c47d"><span class="r">(-4)</span> 9</div>
<div class="c" style="left:1088px;top:494px;width:248px;height:18px;padding-top:0px;padding-right:9px;background:#63be7b"><span class="g">(+4)</span> 5</div>
<div class="c" style="left:1336px;top:494px;width:83px;height:18px;padding-top:0px;padding-right:8px;background:#eef7fd">16</div>
<div class="lnk" style="left:1430px;top:496px;color:#c00000;letter-spacing:2px">/</div>
<div class="a" style="left:36px;top:502px;width:11px;height:1px;background:repeating-linear-gradient(90deg,#8c8c8c 0 1px,transparent 1px 2px)"></div>
<svg class="a" style="left:45px;top:494px" width="16" height="17" viewBox="0 0 16 17"><rect x="4.5" y="1.5" width="11" height="14" fill="#eef1f7" stroke="#98a0ae" stroke-width="1"/><rect x="5.5" y="9.2" width="9" height="1" fill="#c4cad6"/><text x="2.3" y="15.4" font-family="Liberation Serif, serif" font-size="16" fill="#1a1a1a">A</text><path d="M2.3 15 L7.4 5.2" stroke="#dcb93a" stroke-width="1.9"/><path d="M1.6 15.3 H4.2" stroke="#b09428" stroke-width="0.9"/></svg>
<div class="c" style="left:344px;top:512px;width:248px;height:18px;padding-top:0px;padding-right:9px;background:#63be7b"><span class="g">(+5)</span> <b>3</b></div>
<div class="c" style="left:592px;top:512px;width:248px;height:18px;padding-top:0px;padding-right:9px;background:#73c47d"><span class="r">(-2)</span> 8</div>
<div class="c" style="left:840px;top:512px;width:248px;height:18px;padding-top:0px;padding-right:9px;background:#73c47d"><span class="g">(+1)</span> 6</div>
<div class="c" style="left:1088px;top:512px;width:248px;height:18px;padding-top:0px;padding-right:9px;background:#73c47d"><span class="g">(+2)</span> 7</div>
<div class="c" style="left:1336px;top:512px;width:83px;height:18px;padding-top:0px;padding-right:8px;background:#eef7fd">15</div>
<div class="lnk" style="left:1430px;top:514px;color:#000080;letter-spacing:2px">/</div>
<div class="a" style="left:36px;top:520px;width:11px;height:1px;background:repeating-linear-gradient(90deg,#8c8c8c 0 1px,transparent 1px 2px)"></div>
<svg class="a" style="left:45px;top:512px" width="16" height="17" viewBox="0 0 16 17"><rect x="4.5" y="1.5" width="11" height="14" fill="#eef1f7" stroke="#98a0ae" stroke-width="1"/><rect x="5.5" y="9.2" width="9" height="1" fill="#c4cad6"/><text x="2.3" y="15.4" font-family="Liberation Serif, serif" font-size="16" fill="#1a1a1a">A</text><path d="M2.3 15 L7.4 5.2" stroke="#dcb93a" stroke-width="1.9"/><path d="M1.6 15.3 H4.2" stroke="#b09428" stroke-width="0.9"/></svg>
<div class="c" style="left:344px;top:530px;width:248px;height:18px;padding-top:0px;padding-right:9px;background:#63be7b"><span class="g">(+2)</span> <b>3</b></div>
<div class="c" style="left:592px;top:530px;width:248px;height:18px;padding-top:0px;padding-right:9px;background:#63be7b"><span class="g">(+3)</span> 5</div>
<div class="c" style="left:840px;top:530px;width:248px;height:18px;padding-top:0px;padding-right:9px;background:#73c47d"><span class="r">(-1)</span> 8</div>
<div class="c" style="left:1088px;top:530px;width:248px;height:18px;padding-top:0px;padding-right:9px;background:#73c47d">7</div>
<div class="c" style="left:1336px;top:530px;width:83px;height:18px;padding-top:0px;padding-right:8px;background:#eef7fd">14</div>
<div class="lnk" style="left:1430px;top:532px;color:#000080;letter-spacing:2px">/</div>
<div class="a" style="left:36px;top:538px;width:11px;height:1px;background:repeating-linear-gradient(90deg,#8c8c8c 0 1px,transparent 1px 2px)"></div>
<svg class="a" style="left:45px;top:530px" width="16" height="17" viewBox="0 0 16 17"><rect x="4.5" y="1.5" width="11" height="14" fill="#eef1f7" stroke="#98a0ae" stroke-width="1"/><rect x="5.5" y="9.2" width="9" height="1" fill="#c4cad6"/><text x="2.3" y="15.4" font-family="Liberation Serif, serif" font-size="16" fill="#1a1a1a">A</text><path d="M2.3 15 L7.4 5.2" stroke="#dcb93a" stroke-width="1.9"/><path d="M1.6 15.3 H4.2" stroke="#b09428" stroke-width="0.9"/></svg>
<div class="c" style="left:344px;top:548px;width:248px;height:18px;padding-top:0px;padding-right:9px;background:#63be7b"><span class="g">(+10)</span> <b>3</b></div>
<div class="c" style="left:592px;top:548px;width:248px;height:18px;padding-top:0px;padding-right:9px;background:#83ca80"><span class="r">(-8)</span> 13</div>
<div class="c" style="left:840px;top:548px;width:248px;height:18px;padding-top:0px;padding-right:9px;background:#63be7b"><span class="g">(+11)</span> 5</div>
<div class="c" style="left:1088px;top:548px;width:248px;height:18px;padding-top:0px;padding-right:9px;background:#83ca80"><span class="r">(-1)</span> 16</div>
<div class="c" style="left:1336px;top:548px;width:83px;height:18px;padding-top:0px;padding-right:8px;background:#eef7fd">11</div>
<div class="lnk" style="left:1430px;top:550px;color:#000080;letter-spacing:2px">/</div>
<div class="a" style="left:36px;top:556px;width:11px;height:1px;background:repeating-linear-gradient(90deg,#8c8c8c 0 1px,transparent 1px 2px)"></div>
<svg class="a" style="left:45px;top:548px" width="16" height="17" viewBox="0 0 16 17"><rect x="4.5" y="1.5" width="11" height="14" fill="#eef1f7" stroke="#98a0ae" stroke-width="1"/><rect x="5.5" y="9.2" width="9" height="1" fill="#c4cad6"/><text x="2.3" y="15.4" font-family="Liberation Serif, serif" font-size="16" fill="#1a1a1a">A</text><path d="M2.3 15 L7.4 5.2" stroke="#dcb93a" stroke-width="1.9"/><path d="M1.6 15.3 H4.2" stroke="#b09428" stroke-width="0.9"/></svg>
<div class="c" style="left:344px;top:566px;width:248px;height:18px;padding-top:0px;padding-right:9px;background:#63be7b"><b>3</b></div>
<div class="c" style="left:592px;top:566px;width:248px;height:18px;padding-top:0px;padding-right:9px;background:#63be7b"><span class="r">(-1)</span> 3</div>
<div class="c" style="left:840px;top:566px;width:248px;height:18px;padding-top:0px;padding-right:9px;background:#63be7b"><span class="g">(+1)</span> 2</div>
<div class="c" style="left:1088px;top:566px;width:248px;height:18px;padding-top:0px;padding-right:9px;background:#63be7b"><span class="r">(-2)</span> 3</div>
<div class="c" style="left:1336px;top:566px;width:83px;height:18px;padding-top:0px;padding-right:8px;background:#eef7fd">18</div>
<div class="lnk" style="left:1430px;top:568px;color:#c00000">/products/b</div>
<div class="a" style="left:36px;top:574px;width:11px;height:1px;background:repeating-linear-gradient(90deg,#8c8c8c 0 1px,transparent 1px 2px)"></div>
<svg class="a" style="left:45px;top:566px" width="16" height="17" viewBox="0 0 16 17"><rect x="4.5" y="1.5" width="11" height="14" fill="#eef1f7" stroke="#98a0ae" stroke-width="1"/><rect x="5.5" y="9.2" width="9" height="1" fill="#c4cad6"/><text x="2.3" y="15.4" font-family="Liberation Serif, serif" font-size="16" fill="#1a1a1a">A</text><path d="M2.3 15 L7.4 5.2" stroke="#dcb93a" stroke-width="1.9"/><path d="M1.6 15.3 H4.2" stroke="#b09428" stroke-width="0.9"/></svg>
<div class="c" style="left:344px;top:584px;width:248px;height:18px;padding-top:0px;padding-right:9px;background:#63be7b"><b>3</b></div>
<div class="c" style="left:592px;top:584px;width:248px;height:18px;padding-top:0px;padding-right:9px;background:#63be7b"><span class="g">(+1)</span> 3</div>
<div class="c" style="left:840px;top:584px;width:248px;height:18px;padding-top:0px;padding-right:9px;background:#63be7b"><span class="r">(-1)</span> 4</div>
<div class="c" style="left:1088px;top:584px;width:248px;height:18px;padding-top:0px;padding-right:9px;background:#63be7b">3</div>
<div class="c" style="left:1336px;top:584px;width:83px;height:18px;padding-top:0px;padding-right:8px;background:#eef7fd">9</div>
<div class="lnk" style="left:1430px;top:586px;color:#000080">/products/r</div>
<div class="a" style="left:36px;top:592px;width:11px;height:1px;background:repeating-linear-gradient(90deg,#8c8c8c 0 1px,transparent 1px 2px)"></div>
<svg class="a" style="left:45px;top:584px" width="16" height="17" viewBox="0 0 16 17"><rect x="4.5" y="1.5" width="11" height="14" fill="#eef1f7" stroke="#98a0ae" stroke-width="1"/><rect x="5.5" y="9.2" width="9" height="1" fill="#c4cad6"/><text x="2.3" y="15.4" font-family="Liberation Serif, serif" font-size="16" fill="#1a1a1a">A</text><path d="M2.3 15 L7.4 5.2" stroke="#dcb93a" stroke-width="1.9"/><path d="M1.6 15.3 H4.2" stroke="#b09428" stroke-width="0.9"/></svg>
<div class="c" style="left:344px;top:602px;width:248px;height:18px;padding-top:0px;padding-right:9px;background:#63be7b"><span class="g">(+5)</span> <b>3</b></div>
<div class="c" style="left:592px;top:602px;width:248px;height:18px;padding-top:0px;padding-right:9px;background:#73c47d"><span class="r">(-1)</span> 8</div>
<div class="c" style="left:840px;top:602px;width:248px;height:18px;padding-top:0px;padding-right:9px;background:#73c47d">7</div>
<div class="c" style="left:1088px;top:602px;width:248px;height:18px;padding-top:0px;padding-right:9px;background:#73c47d"><span class="g">(+2)</span> 7</div>
<div class="c" style="left:1336px;top:602px;width:83px;height:18px;padding-top:0px;padding-right:8px;background:#eef7fd">14</div>
<div class="lnk" style="left:1430px;top:604px;color:#c00000;letter-spacing:2px">/</div>
<div class="a" style="left:36px;top:610px;width:11px;height:1px;background:repeating-linear-gradient(90deg,#8c8c8c 0 1px,transparent 1px 2px)"></div>
<svg class="a" style="left:45px;top:602px" width="16" height="17" viewBox="0 0 16 17"><rect x="4.5" y="1.5" width="11" height="14" fill="#eef1f7" stroke="#98a0ae" stroke-width="1"/><rect x="5.5" y="9.2" width="9" height="1" fill="#c4cad6"/><text x="2.3" y="15.4" font-family="Liberation Serif, serif" font-size="16" fill="#1a1a1a">A</text><path d="M2.3 15 L7.4 5.2" stroke="#dcb93a" stroke-width="1.9"/><path d="M1.6 15.3 H4.2" stroke="#b09428" stroke-width="0.9"/></svg>
<div class="c" style="left:344px;top:620px;width:248px;height:18px;padding-top:0px;padding-right:9px;background:#63be7b"><span class="g">(+9)</span> <b>3</b></div>
<div class="c" style="left:592px;top:620px;width:248px;height:18px;padding-top:0px;padding-right:9px;background:#83ca80"><span class="g">(+14)</span> 12</div>
<div class="c" style="left:840px;top:620px;width:248px;height:18px;padding-top:0px;padding-right:9px;background:#92d085"><span class="r">(-13)</span> 26</div>
<div class="c" style="left:1088px;top:620px;width:248px;height:18px;padding-top:0px;padding-right:9px;background:#83ca80"><span class="g">(+4)</span> 13</div>
<div class="c" style="left:1336px;top:620px;width:83px;height:18px;padding-top:0px;padding-right:8px;background:#eef7fd">9</div>
<div class="lnk" style="left:1430px;top:622px;color:#c00000;letter-spacing:2px">/</div>
<div class="a" style="left:36px;top:628px;width:11px;height:1px;background:repeating-linear-gradient(90deg,#8c8c8c 0 1px,transparent 1px 2px)"></div>
<svg class="a" style="left:45px;top:620px" width="16" height="17" viewBox="0 0 16 17"><rect x="4.5" y="1.5" width="11" height="14" fill="#eef1f7" stroke="#98a0ae" stroke-width="1"/><rect x="5.5" y="9.2" width="9" height="1" fill="#c4cad6"/><text x="2.3" y="15.4" font-family="Liberation Serif, serif" font-size="16" fill="#1a1a1a">A</text><path d="M2.3 15 L7.4 5.2" stroke="#dcb93a" stroke-width="1.9"/><path d="M1.6 15.3 H4.2" stroke="#b09428" stroke-width="0.9"/></svg>
<div class="c" style="left:344px;top:638px;width:248px;height:18px;padding-top:0px;padding-right:9px;background:#63be7b"><span class="g">(+5)</span> <b>3</b></div>
<div class="c" style="left:592px;top:638px;width:248px;height:18px;padding-top:0px;padding-right:9px;background:#73c47d"><span class="r">(-7)</span> 8</div>
<div class="c" style="left:840px;top:638px;width:248px;height:18px;padding-top:0px;padding-right:9px;background:#63be7b"><span class="g">(+6)</span> 1</div>
<div class="c" style="left:1088px;top:638px;width:248px;height:18px;padding-top:0px;padding-right:9px;background:#73c47d"><span class="r">(-1)</span> 7</div>
<div class="c" style="left:1336px;top:638px;width:83px;height:18px;padding-top:0px;padding-right:8px;background:#eef7fd">25</div>
<div class="lnk" style="left:1430px;top:640px;color:#c00000;letter-spacing:2px">/</div>
<div class="a" style="left:36px;top:646px;width:11px;height:1px;background:repeating-linear-gradient(90deg,#8c8c8c 0 1px,transparent 1px 2px)"></div>
<svg class="a" style="left:45px;top:638px" width="16" height="17" viewBox="0 0 16 17"><rect x="4.5" y="1.5" width="11" height="14" fill="#eef1f7" stroke="#98a0ae" stroke-width="1"/><rect x="5.5" y="9.2" width="9" height="1" fill="#c4cad6"/><text x="2.3" y="15.4" font-family="Liberation Serif, serif" font-size="16" fill="#1a1a1a">A</text><path d="M2.3 15 L7.4 5.2" stroke="#dcb93a" stroke-width="1.9"/><path d="M1.6 15.3 H4.2" stroke="#b09428" stroke-width="0.9"/></svg>
<div class="c" style="left:344px;top:656px;width:248px;height:18px;padding-top:0px;padding-right:9px;background:#63be7b"><span class="g">(+9)</span> <b>4</b></div>
<div class="c" style="left:592px;top:656px;width:248px;height:18px;padding-top:0px;padding-right:9px;background:#83ca80"><span class="g">(+1)</span> 13</div>
<div class="c" style="left:840px;top:656px;width:248px;height:18px;padding-top:0px;padding-right:9px;background:#83ca80"><span class="r">(-1)</span> 14</div>
<div class="c" style="left:1088px;top:656px;width:248px;height:18px;padding-top:0px;padding-right:9px;background:#83ca80"><span class="g">(+6)</span> 13</div>
<div class="c" style="left:1336px;top:656px;width:83px;height:18px;padding-top:0px;padding-right:8px;background:#eef7fd">9</div>
<div class="lnk" style="left:1430px;top:658px;color:#c00000;letter-spacing:2px">/</div>
<div class="a" style="left:36px;top:664px;width:11px;height:1px;background:repeating-linear-gradient(90deg,#8c8c8c 0 1px,transparent 1px 2px)"></div>
<svg class="a" style="left:45px;top:656px" width="16" height="17" viewBox="0 0 16 17"><rect x="4.5" y="1.5" width="11" height="14" fill="#eef1f7" stroke="#98a0ae" stroke-width="1"/><rect x="5.5" y="9.2" width="9" height="1" fill="#c4cad6"/><text x="2.3" y="15.4" font-family="Liberation Serif, serif" font-size="16" fill="#1a1a1a">A</text><path d="M2.3 15 L7.4 5.2" stroke="#dcb93a" stroke-width="1.9"/><path d="M1.6 15.3 H4.2" stroke="#b09428" stroke-width="0.9"/></svg>
<div class="c" style="left:344px;top:674px;width:248px;height:18px;padding-top:0px;padding-right:9px;background:#63be7b"><span class="r">(-1)</span> <b>4</b></div>
<div class="c" style="left:592px;top:674px;width:248px;height:18px;padding-top:0px;padding-right:9px;background:#63be7b">3</div>
<div class="c" style="left:840px;top:674px;width:248px;height:18px;padding-top:0px;padding-right:9px;background:#63be7b"><span class="r">(-1)</span> 3</div>
<div class="c" style="left:1088px;top:674px;width:248px;height:18px;padding-top:0px;padding-right:9px;background:#63be7b"><span class="r">(-1)</span> 2</div>
<div class="c" style="left:1336px;top:674px;width:83px;height:18px;padding-top:0px;padding-right:8px;background:#eef7fd">6</div>
<div class="lnk" style="left:1430px;top:676px;color:#000080">/products/r</div>
<div class="a" style="left:36px;top:682px;width:11px;height:1px;background:repeating-linear-gradient(90deg,#8c8c8c 0 1px,transparent 1px 2px)"></div>
<svg class="a" style="left:45px;top:674px" width="16" height="17" viewBox="0 0 16 17"><rect x="4.5" y="1.5" width="11" height="14" fill="#eef1f7" stroke="#98a0ae" stroke-width="1"/><rect x="5.5" y="9.2" width="9" height="1" fill="#c4cad6"/><text x="2.3" y="15.4" font-family="Liberation Serif, serif" font-size="16" fill="#1a1a1a">A</text><path d="M2.3 15 L7.4 5.2" stroke="#dcb93a" stroke-width="1.9"/><path d="M1.6 15.3 H4.2" stroke="#b09428" stroke-width="0.9"/></svg>
<div class="c" style="left:344px;top:692px;width:248px;height:18px;padding-top:0px;padding-right:9px;background:#63be7b"><span class="g">(+13)</span> <b>4</b></div>
<div class="c" style="left:592px;top:692px;width:248px;height:18px;padding-top:0px;padding-right:9px;background:#83ca80"><span class="r">(-4)</span> 17</div>
<div class="c" style="left:840px;top:692px;width:248px;height:18px;padding-top:0px;padding-right:9px;background:#83ca80"><span class="g">(+7)</span> 13</div>
<div class="c" style="left:1088px;top:692px;width:248px;height:18px;padding-top:0px;padding-right:9px;background:#83ca80"><span class="g">(+1)</span> 20</div>
<div class="c" style="left:1336px;top:692px;width:83px;height:18px;padding-top:0px;padding-right:8px;background:#eef7fd">19</div>
<div class="lnk" style="left:1430px;top:694px;color:#000080;letter-spacing:2px">/</div>
<div class="a" style="left:36px;top:700px;width:11px;height:1px;background:repeating-linear-gradient(90deg,#8c8c8c 0 1px,transparent 1px 2px)"></div>
<svg class="a" style="left:45px;top:692px" width="16" height="17" viewBox="0 0 16 17"><rect x="4.5" y="1.5" width="11" height="14" fill="#eef1f7" stroke="#98a0ae" stroke-width="1"/><rect x="5.5" y="9.2" width="9" height="1" fill="#c4cad6"/><text x="2.3" y="15.4" font-family="Liberation Serif, serif" font-size="16" fill="#1a1a1a">A</text><path d="M2.3 15 L7.4 5.2" stroke="#dcb93a" stroke-width="1.9"/><path d="M1.6 15.3 H4.2" stroke="#b09428" stroke-width="0.9"/></svg>
<div class="c" style="left:344px;top:710px;width:248px;height:18px;padding-top:0px;padding-right:9px;background:#63be7b"><span class="g">(+10)</span> <b>4</b></div>
<div class="c" style="left:592px;top:710px;width:248px;height:18px;padding-top:0px;padding-right:9px;background:#83ca80">14</div>
<div class="c" style="left:840px;top:710px;width:248px;height:18px;padding-top:0px;padding-right:9px;background:#ffffff">>100</div>
<div class="c" style="left:1088px;top:710px;width:248px;height:18px;padding-top:0px;padding-right:9px;background:#83ca80"><span class="g">(+4)</span> 13</div>
<div class="c" style="left:1336px;top:710px;width:83px;height:18px;padding-top:0px;padding-right:8px;background:#eef7fd">18</div>
<div class="lnk" style="left:1430px;top:712px;color:#000080;letter-spacing:2px">/</div>
<div class="a" style="left:36px;top:718px;width:11px;height:1px;background:repeating-linear-gradient(90deg,#8c8c8c 0 1px,transparent 1px 2px)"></div>
<svg class="a" style="left:45px;top:710px" width="16" height="17" viewBox="0 0 16 17"><rect x="4.5" y="1.5" width="11" height="14" fill="#eef1f7" stroke="#98a0ae" stroke-width="1"/><rect x="5.5" y="9.2" width="9" height="1" fill="#c4cad6"/><text x="2.3" y="15.4" font-family="Liberation Serif, serif" font-size="16" fill="#1a1a1a">A</text><path d="M2.3 15 L7.4 5.2" stroke="#dcb93a" stroke-width="1.9"/><path d="M1.6 15.3 H4.2" stroke="#b09428" stroke-width="0.9"/></svg>
<div class="c" style="left:344px;top:728px;width:248px;height:18px;padding-top:0px;padding-right:9px;background:#63be7b"><span class="g">(+3)</span> <b>4</b></div>
<div class="c" style="left:592px;top:728px;width:248px;height:18px;padding-top:0px;padding-right:9px;background:#73c47d"><span class="g">(+3)</span> 7</div>
<div class="c" style="left:840px;top:728px;width:248px;height:18px;padding-top:0px;padding-right:9px;background:#73c47d"><span class="r">(-3)</span> 10</div>
<div class="c" style="left:1088px;top:728px;width:248px;height:18px;padding-top:0px;padding-right:9px;background:#73c47d"><span class="g">(+1)</span> 7</div>
<div class="c" style="left:1336px;top:728px;width:83px;height:18px;padding-top:0px;padding-right:8px;background:#eef7fd">16</div>
<div class="lnk" style="left:1430px;top:730px;color:#c00000;letter-spacing:2px">/</div>
<div class="a" style="left:36px;top:736px;width:11px;height:1px;background:repeating-linear-gradient(90deg,#8c8c8c 0 1px,transparent 1px 2px)"></div>
<svg class="a" style="left:45px;top:728px" width="16" height="17" viewBox="0 0 16 17"><rect x="4.5" y="1.5" width="11" height="14" fill="#eef1f7" stroke="#98a0ae" stroke-width="1"/><rect x="5.5" y="9.2" width="9" height="1" fill="#c4cad6"/><text x="2.3" y="15.4" font-family="Liberation Serif, serif" font-size="16" fill="#1a1a1a">A</text><path d="M2.3 15 L7.4 5.2" stroke="#dcb93a" stroke-width="1.9"/><path d="M1.6 15.3 H4.2" stroke="#b09428" stroke-width="0.9"/></svg>
<div class="c" style="left:344px;top:746px;width:248px;height:18px;padding-top:0px;padding-right:9px;background:#63be7b"><span class="r">(-2)</span> <b>4</b></div>
<div class="c" style="left:592px;top:746px;width:248px;height:18px;padding-top:0px;padding-right:9px;background:#63be7b"><span class="g">(+1)</span> 2</div>
<div class="c" style="left:840px;top:746px;width:248px;height:18px;padding-top:0px;padding-right:9px;background:#63be7b"><span class="r">(-2)</span> 3</div>
<div class="c" style="left:1088px;top:746px;width:248px;height:18px;padding-top:0px;padding-right:9px;background:#63be7b">1</div>
<div class="c" style="left:1336px;top:746px;width:83px;height:18px;padding-top:0px;padding-right:8px;background:#eef7fd">7</div>
<div class="lnk" style="left:1430px;top:748px;color:#000080">/products/r</div>
<div class="a" style="left:36px;top:754px;width:11px;height:1px;background:repeating-linear-gradient(90deg,#8c8c8c 0 1px,transparent 1px 2px)"></div>
<svg class="a" style="left:45px;top:746px" width="16" height="17" viewBox="0 0 16 17"><rect x="4.5" y="1.5" width="11" height="14" fill="#eef1f7" stroke="#98a0ae" stroke-width="1"/><rect x="5.5" y="9.2" width="9" height="1" fill="#c4cad6"/><text x="2.3" y="15.4" font-family="Liberation Serif, serif" font-size="16" fill="#1a1a1a">A</text><path d="M2.3 15 L7.4 5.2" stroke="#dcb93a" stroke-width="1.9"/><path d="M1.6 15.3 H4.2" stroke="#b09428" stroke-width="0.9"/></svg>
<div class="c" style="left:344px;top:764px;width:248px;height:18px;padding-top:0px;padding-right:9px;background:#63be7b"><span class="g">(+12)</span> <b>4</b></div>
<div class="c" style="left:592px;top:764px;width:248px;height:18px;padding-top:0px;padding-right:9px;background:#83ca80"><span class="g">(+10)</span> 16</div>
<div class="c" style="left:840px;top:764px;width:248px;height:18px;padding-top:0px;padding-right:9px;background:#92d085"><span class="r">(-9)</span> 26</div>
<div class="c" style="left:1088px;top:764px;width:248px;height:18px;padding-top:0px;padding-right:9px;background:#83ca80"><span class="r">(-5)</span> 17</div>
<div class="c" style="left:1336px;top:764px;width:83px;height:18px;padding-top:0px;padding-right:8px;background:#eef7fd">33</div>
<div class="lnk" style="left:1430px;top:766px;color:#000080;letter-spacing:2px">/</div>
<div class="a" style="left:36px;top:772px;width:11px;height:1px;background:repeating-linear-gradient(90deg,#8c8c8c 0 1px,transparent 1px 2px)"></div>
<svg class="a" style="left:45px;top:764px" width="16" height="17" viewBox="0 0 16 17"><rect x="4.5" y="1.5" width="11" height="14" fill="#eef1f7" stroke="#98a0ae" stroke-width="1"/><rect x="5.5" y="9.2" width="9" height="1" fill="#c4cad6"/><text x="2.3" y="15.4" font-family="Liberation Serif, serif" font-size="16" fill="#1a1a1a">A</text><path d="M2.3 15 L7.4 5.2" stroke="#dcb93a" stroke-width="1.9"/><path d="M1.6 15.3 H4.2" stroke="#b09428" stroke-width="0.9"/></svg>
<div class="c" style="left:344px;top:782px;width:248px;height:18px;padding-top:0px;padding-right:9px;background:#63be7b"><span class="g">(+11)</span> <b>4</b></div>
<div class="c" style="left:592px;top:782px;width:248px;height:18px;padding-top:0px;padding-right:9px;background:#83ca80">15</div>
<div class="c" style="left:840px;top:782px;width:248px;height:18px;padding-top:0px;padding-right:9px;background:#83ca80">15</div>
<div class="c" style="left:1088px;top:782px;width:248px;height:18px;padding-top:0px;padding-right:9px;background:#83ca80"><span class="r">(-4)</span> 15</div>
<div class="c" style="left:1336px;top:782px;width:83px;height:18px;padding-top:0px;padding-right:8px;background:#eef7fd">18</div>
<div class="lnk" style="left:1430px;top:784px;color:#000080;letter-spacing:2px">/</div>
<div class="a" style="left:36px;top:790px;width:11px;height:1px;background:repeating-linear-gradient(90deg,#8c8c8c 0 1px,transparent 1px 2px)"></div>
<svg class="a" style="left:45px;top:782px" width="16" height="17" viewBox="0 0 16 17"><rect x="4.5" y="1.5" width="11" height="14" fill="#eef1f7" stroke="#98a0ae" stroke-width="1"/><rect x="5.5" y="9.2" width="9" height="1" fill="#c4cad6"/><text x="2.3" y="15.4" font-family="Liberation Serif, serif" font-size="16" fill="#1a1a1a">A</text><path d="M2.3 15 L7.4 5.2" stroke="#dcb93a" stroke-width="1.9"/><path d="M1.6 15.3 H4.2" stroke="#b09428" stroke-width="0.9"/></svg>
<div class="c" style="left:344px;top:800px;width:248px;height:18px;padding-top:0px;padding-right:9px;background:#63be7b"><span class="g">(+2)</span> <b>4</b></div>
<div class="c" style="left:592px;top:800px;width:248px;height:18px;padding-top:0px;padding-right:9px;background:#73c47d"><span class="g">(+5)</span> 6</div>
<div class="c" style="left:840px;top:800px;width:248px;height:18px;padding-top:0px;padding-right:9px;background:#83ca80"><span class="r">(-4)</span> 11</div>
<div class="c" style="left:1088px;top:800px;width:248px;height:18px;padding-top:0px;padding-right:9px;background:#73c47d"><span class="r">(-2)</span> 7</div>
<div class="c" style="left:1336px;top:800px;width:83px;height:18px;padding-top:0px;padding-right:8px;background:#eef7fd">17</div>
<div class="lnk" style="left:1430px;top:802px;color:#000080;letter-spacing:2px">/</div>
<div class="a" style="left:36px;top:808px;width:11px;height:1px;background:repeating-linear-gradient(90deg,#8c8c8c 0 1px,transparent 1px 2px)"></div>
<svg class="a" style="left:45px;top:800px" width="16" height="17" viewBox="0 0 16 17"><rect x="4.5" y="1.5" width="11" height="14" fill="#eef1f7" stroke="#98a0ae" stroke-width="1"/><rect x="5.5" y="9.2" width="9" height="1" fill="#c4cad6"/><text x="2.3" y="15.4" font-family="Liberation Serif, serif" font-size="16" fill="#1a1a1a">A</text><path d="M2.3 15 L7.4 5.2" stroke="#dcb93a" stroke-width="1.9"/><path d="M1.6 15.3 H4.2" stroke="#b09428" stroke-width="0.9"/></svg>
<div class="c" style="left:344px;top:818px;width:248px;height:18px;padding-top:0px;padding-right:9px;background:#63be7b"><b>4</b></div>
<div class="c" style="left:592px;top:818px;width:248px;height:18px;padding-top:0px;padding-right:9px;background:#63be7b"><span class="r">(-1)</span> 4</div>
<div class="c" style="left:840px;top:818px;width:248px;height:18px;padding-top:0px;padding-right:9px;background:#63be7b"><span class="r">(-2)</span> 3</div>
<div class="c" style="left:1088px;top:818px;width:248px;height:18px;padding-top:0px;padding-right:9px;background:#63be7b">1</div>
<div class="c" style="left:1336px;top:818px;width:83px;height:18px;padding-top:0px;padding-right:8px;background:#eef7fd">7</div>
<div class="lnk" style="left:1430px;top:820px;color:#000080">/products/i</div>
<div class="a" style="left:36px;top:826px;width:11px;height:1px;background:repeating-linear-gradient(90deg,#8c8c8c 0 1px,transparent 1px 2px)"></div>
<svg class="a" style="left:45px;top:818px" width="16" height="17" viewBox="0 0 16 17"><rect x="4.5" y="1.5" width="11" height="14" fill="#eef1f7" stroke="#98a0ae" stroke-width="1"/><rect x="5.5" y="9.2" width="9" height="1" fill="#c4cad6"/><text x="2.3" y="15.4" font-family="Liberation Serif, serif" font-size="16" fill="#1a1a1a">A</text><path d="M2.3 15 L7.4 5.2" stroke="#dcb93a" stroke-width="1.9"/><path d="M1.6 15.3 H4.2" stroke="#b09428" stroke-width="0.9"/></svg>
<div class="c" style="left:344px;top:836px;width:248px;height:18px;padding-top:0px;padding-right:9px;background:#63be7b"><span class="g">(+2)</span> <b>4</b></div>
<div class="c" style="left:592px;top:836px;width:248px;height:18px;padding-top:0px;padding-right:9px;background:#73c47d"><span class="r">(-1)</span> 6</div>
<div class="c" style="left:840px;top:836px;width:248px;height:18px;padding-top:0px;padding-right:9px;background:#63be7b"><span class="g">(+6)</span> 5</div>
<div class="c" style="left:1088px;top:836px;width:248px;height:18px;padding-top:0px;padding-right:9px;background:#83ca80"><span class="r">(-7)</span> 11</div>
<div class="c" style="left:1336px;top:836px;width:83px;height:18px;padding-top:0px;padding-right:8px;background:#eef7fd">15</div>
<div class="lnk" style="left:1430px;top:838px;color:#000080">/products/b</div>
<div class="a" style="left:36px;top:844px;width:11px;height:1px;background:repeating-linear-gradient(90deg,#8c8c8c 0 1px,transparent 1px 2px)"></div>
<svg class="a" style="left:45px;top:836px" width="16" height="17" viewBox="0 0 16 17"><rect x="4.5" y="1.5" width="11" height="14" fill="#eef1f7" stroke="#98a0ae" stroke-width="1"/><rect x="5.5" y="9.2" width="9" height="1" fill="#c4cad6"/><text x="2.3" y="15.4" font-family="Liberation Serif, serif" font-size="16" fill="#1a1a1a">A</text><path d="M2.3 15 L7.4 5.2" stroke="#dcb93a" stroke-width="1.9"/><path d="M1.6 15.3 H4.2" stroke="#b09428" stroke-width="0.9"/></svg>
<div class="c" style="left:344px;top:854px;width:248px;height:18px;padding-top:0px;padding-right:9px;background:#63be7b"><span class="g">(+9)</span> <b>4</b></div>
<div class="c" style="left:592px;top:854px;width:248px;height:18px;padding-top:0px;padding-right:9px;background:#83ca80">13</div>
<div class="c" style="left:840px;top:854px;width:248px;height:18px;padding-top:0px;padding-right:9px;background:#83ca80"><span class="r">(-1)</span> 13</div>
<div class="c" style="left:1088px;top:854px;width:248px;height:18px;padding-top:0px;padding-right:9px;background:#83ca80"><span class="r">(-1)</span> 12</div>
<div class="c" style="left:1336px;top:854px;width:83px;height:18px;padding-top:0px;padding-right:8px;background:#eef7fd">10</div>
<div class="lnk" style="left:1430px;top:856px;color:#c00000;letter-spacing:2px">/</div>
<div class="a" style="left:36px;top:862px;width:11px;height:1px;background:repeating-linear-gradient(90deg,#8c8c8c 0 1px,transparent 1px 2px)"></div>
<svg class="a" style="left:45px;top:854px" width="16" height="17" viewBox="0 0 16 17"><rect x="4.5" y="1.5" width="11" height="14" fill="#eef1f7" stroke="#98a0ae" stroke-width="1"/><rect x="5.5" y="9.2" width="9" height="1" fill="#c4cad6"/><text x="2.3" y="15.4" font-family="Liberation Serif, serif" font-size="16" fill="#1a1a1a">A</text><path d="M2.3 15 L7.4 5.2" stroke="#dcb93a" stroke-width="1.9"/><path d="M1.6 15.3 H4.2" stroke="#b09428" stroke-width="0.9"/></svg>
<div class="c" style="left:344px;top:872px;width:248px;height:18px;padding-top:0px;padding-right:9px;background:#63be7b"><span class="g">(+11)</span> <b>4</b></div>
<div class="c" style="left:592px;top:872px;width:248px;height:18px;padding-top:0px;padding-right:9px;background:#83ca80"><span class="r">(-3)</span> 15</div>
<div class="c" style="left:840px;top:872px;width:248px;height:18px;padding-top:0px;padding-right:9px;background:#83ca80"><span class="g">(+13)</span> 12</div>
<div class="c" style="left:1088px;top:872px;width:248px;height:18px;padding-top:0px;padding-right:9px;background:#92d085"><span class="g">(+1)</span> 25</div>
<div class="c" style="left:1336px;top:872px;width:83px;height:18px;padding-top:0px;padding-right:8px;background:#eef7fd">10</div>
<div class="lnk" style="left:1430px;top:874px;color:#c00000;letter-spacing:2px">/</div>
<div class="a" style="left:36px;top:880px;width:11px;height:1px;background:repeating-linear-gradient(90deg,#8c8c8c 0 1px,transparent 1px 2px)"></div>
<svg class="a" style="left:45px;top:872px" width="16" height="17" viewBox="0 0 16 17"><rect x="4.5" y="1.5" width="11" height="14" fill="#eef1f7" stroke="#98a0ae" stroke-width="1"/><rect x="5.5" y="9.2" width="9" height="1" fill="#c4cad6"/><text x="2.3" y="15.4" font-family="Liberation Serif, serif" font-size="16" fill="#1a1a1a">A</text><path d="M2.3 15 L7.4 5.2" stroke="#dcb93a" stroke-width="1.9"/><path d="M1.6 15.3 H4.2" stroke="#b09428" stroke-width="0.9"/></svg>
<div class="c" style="left:344px;top:890px;width:248px;height:18px;padding-top:0px;padding-right:9px;background:#63be7b"><b>4</b></div>
<div class="c" style="left:592px;top:890px;width:248px;height:18px;padding-top:0px;padding-right:9px;background:#63be7b"><span class="g">(+1)</span> 4</div>
<div class="c" style="left:840px;top:890px;width:248px;height:18px;padding-top:0px;padding-right:9px;background:#63be7b"><span class="g">(+5)</span> 5</div>
<div class="c" style="left:1088px;top:890px;width:248px;height:18px;padding-top:0px;padding-right:9px;background:#73c47d"><span class="r">(-6)</span> 10</div>
<div class="c" style="left:1336px;top:890px;width:83px;height:18px;padding-top:0px;padding-right:8px;background:#eef7fd">9</div>
<div class="lnk" style="left:1430px;top:892px;color:#000080">/products/c</div>
<div class="a" style="left:36px;top:898px;width:11px;height:1px;background:repeating-linear-gradient(90deg,#8c8c8c 0 1px,transparent 1px 2px)"></div>
<svg class="a" style="left:45px;top:890px" width="16" height="17" viewBox="0 0 16 17"><rect x="4.5" y="1.5" width="11" height="14" fill="#eef1f7" stroke="#98a0ae" stroke-width="1"/><rect x="5.5" y="9.2" width="9" height="1" fill="#c4cad6"/><text x="2.3" y="15.4" font-family="Liberation Serif, serif" font-size="16" fill="#1a1a1a">A</text><path d="M2.3 15 L7.4 5.2" stroke="#dcb93a" stroke-width="1.9"/><path d="M1.6 15.3 H4.2" stroke="#b09428" stroke-width="0.9"/></svg>
<div class="c" style="left:344px;top:908px;width:248px;height:18px;padding-top:0px;padding-right:9px;background:#63be7b"><span class="g">(+13)</span> <b>5</b></div>
<div class="c" style="left:592px;top:908px;width:248px;height:18px;padding-top:0px;padding-right:9px;background:#83ca80"><span class="g">(+3)</span> 18</div>
<div class="c" style="left:840px;top:908px;width:248px;height:18px;padding-top:0px;padding-right:9px;background:#92d085"><span class="r">(-6)</span> 21</div>
<div class="c" style="left:1088px;top:908px;width:248px;height:18px;padding-top:0px;padding-right:9px;background:#83ca80">15</div>
<div class="c" style="left:1336px;top:908px;width:83px;height:18px;padding-top:0px;padding-right:8px;background:#eef7fd">10</div>
<div class="lnk" style="left:1430px;top:910px;color:#c00000;letter-spacing:2px">/</div>
<div class="a" style="left:36px;top:916px;width:11px;height:1px;background:repeating-linear-gradient(90deg,#8c8c8c 0 1px,transparent 1px 2px)"></div>
<svg class="a" style="left:45px;top:908px" width="16" height="17" viewBox="0 0 16 17"><rect x="4.5" y="1.5" width="11" height="14" fill="#eef1f7" stroke="#98a0ae" stroke-width="1"/><rect x="5.5" y="9.2" width="9" height="1" fill="#c4cad6"/><text x="2.3" y="15.4" font-family="Liberation Serif, serif" font-size="16" fill="#1a1a1a">A</text><path d="M2.3 15 L7.4 5.2" stroke="#dcb93a" stroke-width="1.9"/><path d="M1.6 15.3 H4.2" stroke="#b09428" stroke-width="0.9"/></svg>
<div class="c" style="left:344px;top:926px;width:248px;height:18px;padding-top:0px;padding-right:9px;background:#63be7b"><span class="g">(+4)</span> <b>5</b></div>
<div class="c" style="left:592px;top:926px;width:248px;height:18px;padding-top:0px;padding-right:9px;background:#73c47d"><span class="r">(-1)</span> 9</div>
<div class="c" style="left:840px;top:926px;width:248px;height:18px;padding-top:0px;padding-right:9px;background:#73c47d"><span class="g">(+11)</span> 8</div>
<div class="c" style="left:1088px;top:926px;width:248px;height:18px;padding-top:0px;padding-right:9px;background:#83ca80"><span class="r">(-6)</span> 19</div>
<div class="c" style="left:1336px;top:926px;width:83px;height:18px;padding-top:0px;padding-right:8px;background:#eef7fd">32</div>
<div class="lnk" style="left:1430px;top:928px;color:#000080;letter-spacing:2px">/</div>
<div class="a" style="left:36px;top:934px;width:11px;height:1px;background:repeating-linear-gradient(90deg,#8c8c8c 0 1px,transparent 1px 2px)"></div>
<svg class="a" style="left:45px;top:926px" width="16" height="17" viewBox="0 0 16 17"><rect x="4.5" y="1.5" width="11" height="14" fill="#eef1f7" stroke="#98a0ae" stroke-width="1"/><rect x="5.5" y="9.2" width="9" height="1" fill="#c4cad6"/><text x="2.3" y="15.4" font-family="Liberation Serif, serif" font-size="16" fill="#1a1a1a">A</text><path d="M2.3 15 L7.4 5.2" stroke="#dcb93a" stroke-width="1.9"/><path d="M1.6 15.3 H4.2" stroke="#b09428" stroke-width="0.9"/></svg>
<div class="a" style="left:35px;top:365px;width:1px;height:570px;background:repeating-linear-gradient(180deg,#8c8c8c 0 1px,transparent 1px 2px)"></div>
<div class="a" style="left:47px;top:365px;width:12px;height:1px;background:#8a8a8a"></div>
<div class="gray" style="left:59px;top:361px;width:265px;height:588px"></div>
<div class="gray" style="left:1483px;top:351px;width:113px;height:598px"></div>
<svg class="a" style="left:1037px;top:760px" width="14" height="22" viewBox="0 0 14 22"><path d="M1 1 L1 17 L4.8 13.6 L7.6 20 L10 19 L7.3 12.8 L12.3 12.5 Z" fill="#fff" stroke="#000" stroke-width="1"/></svg>
</div>
</body></html>
